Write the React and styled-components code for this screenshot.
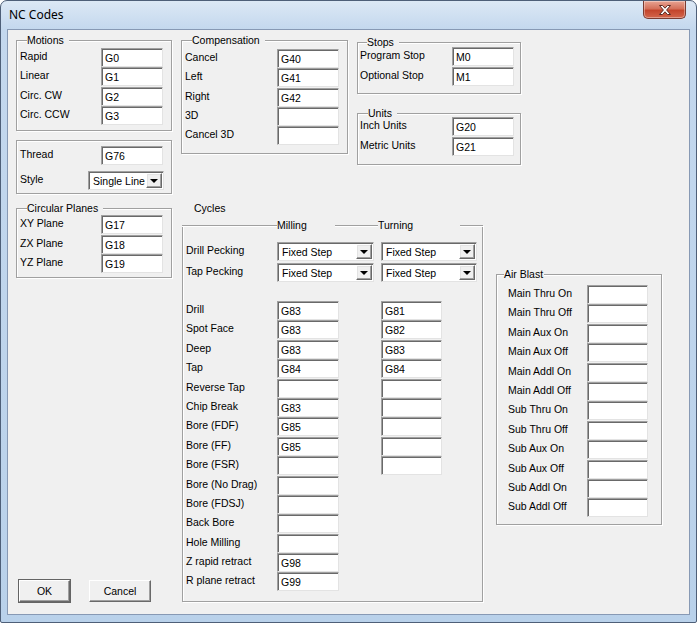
import React from "react";
import styled, { createGlobalStyle } from "styled-components";

const GlobalStyle = createGlobalStyle`
  html, body {
    margin: 0;
    padding: 0;
    background: #ffffff;
  }
  * {
    box-sizing: border-box;
  }
`;

const Window = styled.div`
  width: 697px;
  height: 623px;
  border: 1px solid #4e5f78;
  border-radius: 7px 7px 2px 2px;
  background: linear-gradient(#dce8f5, #c4d8ee 28px, #b9d1ea);
  display: flex;
  flex-direction: column;
  padding: 0 6px 7px 6px;
  font-family: "Liberation Sans", Arial, sans-serif;
  font-size: 10.5px;
  color: #000;
`;

const TitleBar = styled.div`
  height: 28px;
  display: flex;
  justify-content: space-between;
  align-items: flex-start;
`;

const Title = styled.div`
  font-family: "Noto Sans", "Open Sans", sans-serif;
  font-size: 12px;
  padding: 6px 0 0 2px;
  line-height: 16px;
  color: #000;
`;

const CloseButton = styled.div`
  width: 43px;
  height: 18px;
  margin-right: 4px;
  border: 1px solid #7a3b31;
  border-top: none;
  border-radius: 0 0 5px 5px;
  background: linear-gradient(#e8a493, #d4705a 45%, #c3452c 55%, #d3664c);
  box-shadow: inset 0 0 0 1px rgba(255, 255, 255, 0.35);
  display: flex;
  align-items: center;
  justify-content: center;
`;

const Client = styled.div`
  flex: 1;
  border: 1px solid #8799b4;
  background: #f0f0f0;
  display: flex;
  padding: 10px 0 12px 8px;
`;

const LeftColumn = styled.div`
  width: 156px;
  display: flex;
  flex-direction: column;
`;

const RightArea = styled.div`
  margin-left: 9px;
  display: flex;
  flex-direction: column;
`;

const TopRow = styled.div`
  display: flex;
  align-items: flex-start;
`;

const StackColumn = styled.div`
  margin-left: 9px;
  margin-top: 2px;
  display: flex;
  flex-direction: column;
`;

const BottomRow = styled.div`
  flex: 1;
  margin-top: 36px;
  display: flex;
  align-items: flex-start;
`;

const Group = styled.div`
  position: relative;
  width: ${({ $w }) => $w}px;
  height: ${({ $h }) => $h}px;
  margin-top: ${({ $mt }) => $mt || 0}px;
  margin-left: ${({ $ml }) => $ml || 0}px;
  border: 1px solid #a0a0a0;
  box-shadow: 1px 1px 0 #ffffff, inset 1px 1px 0 #ffffff;
  padding: ${({ $pt }) => $pt}px 0 0 ${({ $pl }) => $pl}px;
`;

const Legend = styled.span`
  position: absolute;
  top: -7px;
  left: ${({ $x }) => $x}px;
  line-height: 13px;
  background: #f0f0f0;
  padding: 0 ${({ $pr }) => $pr ?? 5}px 0 0;
`;

const FormGrid = styled.div`
  display: grid;
  grid-template-columns: ${({ $label }) => $label}px ${({ $field }) => $field}px;
  grid-auto-rows: ${({ $row }) => $row}px;
`;

const Label = styled.div`
  line-height: 13px;
  padding-top: 2px;
  white-space: nowrap;
  width: ${({ $w }) => ($w ? `${$w}px` : "auto")};
`;

const Field = styled.div`
  width: ${({ $w }) => $w || 62}px;
  height: 19px;
  background: #ffffff;
  border: 1px solid;
  border-color: #a0a0a0 #e3e3e3 #e3e3e3 #a0a0a0;
  box-shadow: inset 1px 1px 0 #696969;
  padding: 3px 0 0 3px;
  line-height: 13px;
  white-space: nowrap;
`;

const SelectBox = styled.div`
  width: ${({ $w }) => $w}px;
  height: 19px;
  background: #ffffff;
  border: 1px solid;
  border-color: #a0a0a0 #e3e3e3 #e3e3e3 #a0a0a0;
  box-shadow: inset 1px 1px 0 #696969;
  display: flex;
  padding: 1px;
`;

const SelectValue = styled.div`
  flex: 1;
  padding: 2px 0 0 3px;
  line-height: 13px;
  white-space: nowrap;
  overflow: hidden;
`;

const ArrowButton = styled.div`
  width: 16px;
  height: 15px;
  background: #f0f0f0;
  border: 1px solid;
  border-color: #ffffff #696969 #696969 #ffffff;
  box-shadow: inset -1px -1px 0 #a0a0a0, inset 1px 1px 0 #e3e3e3;
  display: flex;
  align-items: center;
  justify-content: center;

  &::after {
    content: "";
    width: 0;
    height: 0;
    border-left: 4px solid transparent;
    border-right: 4px solid transparent;
    border-top: 4px solid #000;
  }
`;

const ThreadRow = styled.div`
  display: flex;
  align-items: flex-start;
  height: ${({ $h }) => $h}px;
`;

const Buttons = styled.div`
  margin-top: auto;
  margin-left: 3px;
  display: flex;
  gap: 19px;
`;

const Button = styled.div`
  width: ${({ $w }) => $w}px;
  height: 22px;
  background: #f0f0f0;
  border: 1px solid;
  border-color: #ffffff #696969 #696969 #ffffff;
  box-shadow: inset -1px -1px 0 #a0a0a0, 0 0 0 ${({ $def }) => ($def ? 1 : 0)}px #646464;
  display: flex;
  align-items: center;
  justify-content: center;
  line-height: 13px;
`;

const CyclesSection = styled.div`
  margin-left: 1px;
  width: 301px;
  align-self: stretch;
  display: flex;
  flex-direction: column;
`;

const CyclesTitle = styled.div`
  height: 14px;
  line-height: 14px;
  padding-left: 12px;
`;

const CyclesBox = styled.div`
  flex: 1;
  margin-top: 10px;
  border: 1px solid #a0a0a0;
  border-top: none;
  box-shadow: 1px 1px 0 #ffffff, inset 1px 0 0 #ffffff;
  padding: 0 0 0 3px;
`;

const CyclesHeader = styled.div`
  display: flex;
  align-items: center;
  height: 14px;
  margin: -7px -1px 0 -4px;
`;

const HeaderLine = styled.div`
  height: 1px;
  background: #a0a0a0;
  box-shadow: 0 1px 0 #ffffff;
  width: ${({ $w }) => ($w ? `${$w}px` : "auto")};
  flex: ${({ $w }) => ($w ? "none" : 1)};
`;

const HeaderLabel = styled.div`
  width: ${({ $w }) => $w}px;
  line-height: 13px;
`;

const CycleGrid = styled.div`
  display: grid;
  grid-template-columns: 91px 104px 100px;
  grid-auto-rows: ${({ $row }) => $row}px;
  margin-top: ${({ $mt }) => $mt}px;
`;

const Close = () => (
  <svg width="14" height="12" viewBox="0 0 14 12">
    <path
      d="M1.5 1.5 H4.5 L7 4.2 L9.5 1.5 H12.5 L8.6 6 L12.5 10.5 H9.5 L7 7.8 L4.5 10.5 H1.5 L5.4 6 Z"
      fill="#ffffff"
      stroke="#5b2a22"
      strokeWidth="1"
      strokeLinejoin="round"
    />
  </svg>
);

const Select = ({ w, value }) => (
  <SelectBox $w={w}>
    <SelectValue>{value}</SelectValue>
    <ArrowButton />
  </SelectBox>
);

const FormGroup = ({ legend, legendX, legendPad, w, h, mt, ml, pt, pl, label, field, row, rows, fieldW }) => (
  <Group $w={w} $h={h} $mt={mt} $ml={ml} $pt={pt} $pl={pl}>
    <Legend $x={legendX} $pr={legendPad}>{legend}</Legend>
    <FormGrid $label={label} $field={field} $row={row}>
      {rows.map(([name, value]) => (
        <React.Fragment key={name}>
          <Label>{name}</Label>
          <Field $w={fieldW}>{value}</Field>
        </React.Fragment>
      ))}
    </FormGrid>
  </Group>
);

const cycleRows = [
  ["Drill", "G83", "G81"],
  ["Spot Face", "G83", "G82"],
  ["Deep", "G83", "G83"],
  ["Tap", "G84", "G84"],
  ["Reverse Tap", "", ""],
  ["Chip Break", "G83", ""],
  ["Bore (FDF)", "G85", ""],
  ["Bore (FF)", "G85", ""],
  ["Bore (FSR)", "", ""],
  ["Bore (No Drag)", "", null],
  ["Bore (FDSJ)", "", null],
  ["Back Bore", "", null],
  ["Hole Milling", "", null],
  ["Z rapid retract", "G98", null],
  ["R plane retract", "G99", null],
];

const airRows = [
  "Main Thru On",
  "Main Thru Off",
  "Main Aux On",
  "Main Aux Off",
  "Main Addl On",
  "Main Addl Off",
  "Sub Thru On",
  "Sub Thru Off",
  "Sub Aux On",
  "Sub Aux Off",
  "Sub Addl On",
  "Sub Addl Off",
].map((n) => [n, ""]);

export default function App() {
  return (
    <>
      <GlobalStyle />
      <Window>
        <TitleBar>
          <Title>NC Codes</Title>
          <CloseButton>
            <Close />
          </CloseButton>
        </TitleBar>
        <Client>
          <LeftColumn>
            <FormGroup
              legend="Motions"
              legendX={10}
              w={156}
              h={91}
              pt={7}
              pl={3}
              label={81}
              field={62}
              row={19.4}
              rows={[
                ["Rapid", "G0"],
                ["Linear", "G1"],
                ["Circ. CW", "G2"],
                ["Circ. CCW", "G3"],
              ]}
            />
            <Group $w={156} $h={54} $mt={9} $pt={5} $pl={3}>
              <ThreadRow $h={25}>
                <Label $w={81}>Thread</Label>
                <Field>G76</Field>
              </ThreadRow>
              <ThreadRow $h={19}>
                <Label $w={68}>Style</Label>
                <Select w={76} value="Single Line" />
              </ThreadRow>
            </Group>
            <FormGroup
              legend="Circular Planes"
              legendX={10}
              w={156}
              h={70}
              mt={14}
              pt={6}
              pl={3}
              label={81}
              field={62}
              row={19.5}
              rows={[
                ["XY Plane", "G17"],
                ["ZX Plane", "G18"],
                ["YZ Plane", "G19"],
              ]}
            />
            <Buttons>
              <Button $w={51} $def>OK</Button>
              <Button $w={62}>Cancel</Button>
            </Buttons>
          </LeftColumn>
          <RightArea>
            <TopRow>
              <FormGroup
                legend="Compensation"
                legendX={10}
                w={167}
                h={114}
                pt={8}
                pl={3}
                label={92}
                field={62}
                row={19.3}
                rows={[
                  ["Cancel", "G40"],
                  ["Left", "G41"],
                  ["Right", "G42"],
                  ["3D", ""],
                  ["Cancel 3D", ""],
                ]}
              />
              <StackColumn>
                <FormGroup
                  legend="Stops"
                  legendX={9}
                  w={164}
                  h={52}
                  pt={4}
                  pl={2}
                  label={92}
                  field={62}
                  row={19.5}
                  rows={[
                    ["Program Stop", "M0"],
                    ["Optional Stop", "M1"],
                  ]}
                />
                <FormGroup
                  legend="Units"
                  legendX={10}
                  w={164}
                  h={52}
                  mt={19}
                  pt={3}
                  pl={2}
                  label={92}
                  field={62}
                  row={20}
                  rows={[
                    ["Inch Units", "G20"],
                    ["Metric Units", "G21"],
                  ]}
                />
              </StackColumn>
            </TopRow>
            <BottomRow>
              <CyclesSection>
                <CyclesTitle>Cycles</CyclesTitle>
                <CyclesBox>
                  <CyclesHeader>
                    <HeaderLine $w={95} />
                    <HeaderLabel $w={58}>Milling</HeaderLabel>
                    <HeaderLine $w={43} />
                    <HeaderLabel $w={82}>Turning</HeaderLabel>
                    <HeaderLine />
                  </CyclesHeader>
                  <CycleGrid $row={21} $mt={10}>
                    <Label>Drill Pecking</Label>
                    <Select w={97} value="Fixed Step" />
                    <Select w={96} value="Fixed Step" />
                    <Label>Tap Pecking</Label>
                    <Select w={97} value="Fixed Step" />
                    <Select w={96} value="Fixed Step" />
                  </CycleGrid>
                  <CycleGrid $row={19.4} $mt={17}>
                    {cycleRows.map(([name, mill, turn]) => (
                      <React.Fragment key={name}>
                        <Label>{name}</Label>
                        <Field>{mill}</Field>
                        {turn === null ? <div /> : <Field $w={61}>{turn}</Field>}
                      </React.Fragment>
                    ))}
                  </CycleGrid>
                </CyclesBox>
              </CyclesSection>
              <FormGroup
                legend="Air Blast"
                legendX={7}
                legendPad={1}
                w={166}
                h={251}
                mt={73}
                ml={13}
                pt={10}
                pl={11}
                label={79}
                field={61}
                fieldW={61}
                row={19.4}
                rows={airRows}
              />
            </BottomRow>
          </RightArea>
        </Client>
      </Window>
    </>
  );
}
